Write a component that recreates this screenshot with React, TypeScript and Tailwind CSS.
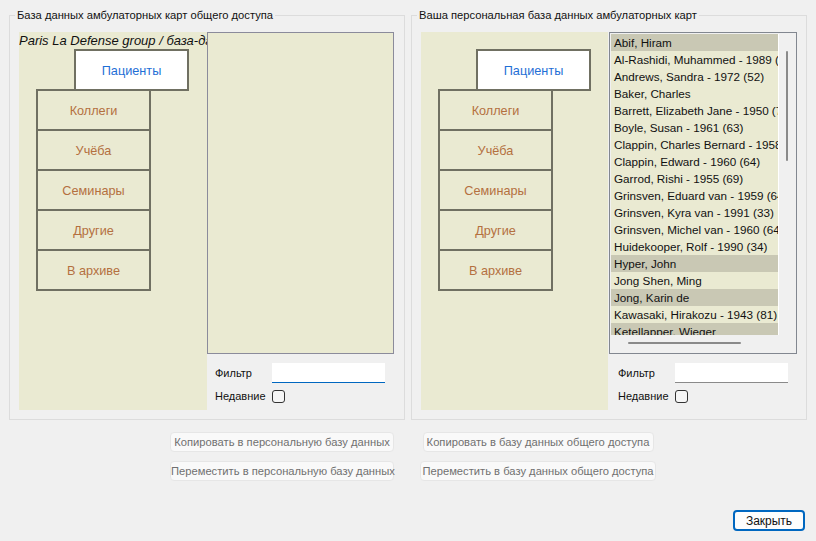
import React from 'react'

type Patient = { name: string; hl?: boolean }

const patients: Patient[] = [
  { name: 'Abif, Hiram', hl: true },
  { name: 'Al-Rashidi, Muhammed - 1989 (35)' },
  { name: 'Andrews, Sandra - 1972 (52)' },
  { name: 'Baker, Charles' },
  { name: 'Barrett, Elizabeth Jane - 1950 (73)' },
  { name: 'Boyle, Susan - 1961 (63)' },
  { name: 'Clappin, Charles Bernard - 1958 (66)' },
  { name: 'Clappin, Edward - 1960 (64)' },
  { name: 'Garrod, Rishi - 1955 (69)' },
  { name: 'Grinsven, Eduard van - 1959 (64)' },
  { name: 'Grinsven, Kyra van - 1991 (33)' },
  { name: 'Grinsven, Michel van - 1960 (64)' },
  { name: 'Huidekooper, Rolf - 1990 (34)' },
  { name: 'Hyper, John', hl: true },
  { name: 'Jong Shen, Ming' },
  { name: 'Jong, Karin de', hl: true },
  { name: 'Kawasaki, Hirakozu - 1943 (81)' },
  { name: 'Ketellapper, Wieger', hl: true },
]

const tabs = ['Коллеги', 'Учёба', 'Семинары', 'Другие', 'В архиве']

function TabPanel({ caption, width }: { caption?: string; width: string }) {
  return (
    <div className={`${width} h-[378px] shrink-0 bg-[#eaead2] overflow-hidden flex flex-col`}>
      <div className="h-[17px] leading-[17px] whitespace-nowrap italic text-[13px] text-[#111]">
        {caption}
      </div>
      <div className="ml-[55px] w-[115px] h-[42px] pt-[3px] border-2 border-[#707062] bg-white flex items-center justify-center text-[12.7px] text-[#1f6fd6]">
        Пациенты
      </div>
      <div className="ml-[17px] -mt-[2px] w-[115px] border-2 border-t-0 border-[#707062]">
        {tabs.map((t) => (
          <div
            key={t}
            className="h-[40px] pt-[3px] border-t-2 border-[#707062] flex items-center justify-center text-[12.7px] text-[#b4703f]"
          >
            {t}
          </div>
        ))}
      </div>
    </div>
  )
}

function FilterRows({ pad, focused }: { pad: string; focused?: boolean }) {
  return (
    <div className={`${pad} flex flex-col text-[11px] text-[#111]`}>
      <div className="mt-[9px] h-[20px] flex items-center">
        <span className="w-[57px]">Фильтр</span>
        <input
          readOnly
          className={`w-[113px] h-[20px] bg-white outline-none border-b ${
            focused ? 'border-[#0067c0]' : 'border-[#8a8a8a]'
          }`}
        />
      </div>
      <div className="mt-[7px] h-[13px] flex items-center">
        <span className="w-[57px]">Недавние</span>
        <div className="w-[13px] h-[13px] border border-[#333] rounded-[3px] bg-[#f6f6f6]" />
      </div>
    </div>
  )
}

function PatientList() {
  return (
    <div className="w-[188px] h-[322px] border border-[#828790] bg-[#f0f0f0] flex flex-col">
      <div className="flex mt-[1px] ml-[1px]">
        <div className="w-[168px] h-[301px] bg-[#eaead2] overflow-hidden border-r border-white text-[11.7px] text-[#111]">
          {patients.map((p) => (
            <div
              key={p.name}
              className={`h-[17px] leading-[17px] pl-[3px] whitespace-nowrap ${p.hl ? 'bg-[#c9c8b4]' : ''}`}
            >
              {p.name}
            </div>
          ))}
        </div>
        <div className="w-[17px]">
          <div className="ml-[7px] mt-[17px] w-[2px] h-[110px] bg-[#8a8a8a] rounded-full" />
        </div>
      </div>
      <div className="h-[17px]">
        <div className="ml-[18px] mt-[7px] w-[113px] h-[2px] bg-[#8a8a8a] rounded-full" />
      </div>
    </div>
  )
}

function Group({ title, children }: { title: string; children: React.ReactNode }) {
  return (
    <fieldset className="w-[396px] min-w-0 border border-[#dcdcdc] pb-[9px]">
      <legend className="ml-[5px] px-[2px] leading-[16px] text-[11.2px] text-[#111]">{title}</legend>
      <div className="flex pl-[9px] pt-[9px]">{children}</div>
    </fieldset>
  )
}

function DisabledBtn({ label, width }: { label: string; width: string }) {
  return (
    <button className={`${width} h-[20px] bg-[#f9f9f9] border border-[#e6e6e6] rounded-[4px] text-[11.2px] text-[#707070] whitespace-nowrap`}>
      {label}
    </button>
  )
}

export default function App() {
  return (
    <div className="w-[816px] h-[541px] bg-[#f0f0f0] flex flex-col overflow-hidden font-['Liberation_Sans',Arial,sans-serif]">
      <div className="flex gap-[6px] px-[9px] pt-[7px]">
        <Group title="База данных амбулаторных карт общего доступа">
          <TabPanel width="w-[188px]" caption="Paris La Defense group / база-данных" />
          <div className="flex flex-col">
            <div className="w-[187px] h-[322px] border border-[#8b8b9b] bg-[#eaead2]" />
            <FilterRows pad="pl-[8px]" focused />
          </div>
        </Group>
        <Group title="Ваша персональная база данных амбулаторных карт">
          <TabPanel width="w-[187px]" />
          <div className="flex flex-col ml-[1px]">
            <PatientList />
            <FilterRows pad="pl-[9px]" />
          </div>
        </Group>
      </div>

      <div className="flex mt-[12px] ml-[170px]">
        <div className="w-[224px] flex flex-col gap-[9px]">
          <DisabledBtn width="w-[224px]" label="Копировать в персональную базу данных" />
          <DisabledBtn width="w-[224px]" label="Переместить в персональную базу данных" />
        </div>
        <div className="ml-[26px] w-[236px] flex flex-col items-center gap-[9px]">
          <DisabledBtn width="w-[231px]" label="Копировать в базу данных общего доступа" />
          <DisabledBtn width="w-[236px]" label="Переместить в базу данных общего доступа" />
        </div>
      </div>

      <div className="mt-auto flex justify-end pr-[11px] pb-[10px]">
        <button className="w-[72px] h-[21px] bg-[#fdfdfd] border-2 border-[#0067c0] rounded-[4px] text-[12px] text-[#111]">
          Закрыть
        </button>
      </div>
    </div>
  )
}
